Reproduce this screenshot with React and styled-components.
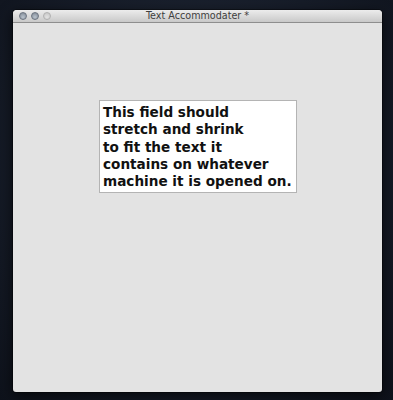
import styled, { createGlobalStyle } from 'styled-components';

const GlobalStyle = createGlobalStyle`
  html, body {
    margin: 0;
    padding: 0;
  }
  body {
    width: 393px;
    height: 400px;
    overflow: hidden;
    background: radial-gradient(ellipse at 50% 40%, #222a3a 0%, #161c28 60%, #0e121b 100%);
    font-family: "DejaVu Sans", "Liberation Sans", sans-serif;
  }
`;

const Desktop = styled.div`
  width: 393px;
  height: 400px;
  padding: 10px 11px 8px 13px;
  box-sizing: border-box;
  display: flex;
`;

const Window = styled.div`
  flex: 1;
  display: flex;
  flex-direction: column;
  border-radius: 4px 4px 3px 3px;
  overflow: hidden;
  background: #e3e3e3;
  box-shadow: 0 4px 14px rgba(0, 0, 0, 0.7), 0 0 0 1px rgba(0, 0, 0, 0.35);
`;

const TitleBar = styled.div`
  height: 12px;
  flex-shrink: 0;
  display: flex;
  align-items: center;
  position: relative;
  padding: 0 6px;
  background: linear-gradient(#ececec, #c9c9c9);
  border-bottom: 1px solid #8e8e8e;
`;

const Lights = styled.div`
  display: flex;
  gap: 4px;
`;

const Light = styled.span`
  width: 8px;
  height: 8px;
  border-radius: 50%;
  box-sizing: border-box;
  background: ${p => p.$dim
    ? 'radial-gradient(circle at 50% 70%, #e2e2e2, #c4c4c4)'
    : 'radial-gradient(circle at 50% 70%, #b9c2cc, #7d8793)'};
  border: 1px solid ${p => (p.$dim ? '#b0b0b0' : '#6c7580')};
`;

const Title = styled.div`
  position: absolute;
  left: 0;
  right: 0;
  text-align: center;
  font-size: 9.6px;
  color: #3e3e3e;
  line-height: 12px;
`;

const Content = styled.div`
  flex: 1;
  padding: 77px 0 0 86px;
`;

const Field = styled.div`
  display: inline-block;
  background: #fff;
  border: 1px solid #b4b4b4;
  padding: 3px 4px 2px 3px;
  font-weight: bold;
  font-size: 13.6px;
  line-height: 17.3px;
  color: #111;
  white-space: pre;
`;

export default function App() {
  return (
    <>
      <GlobalStyle />
      <Desktop>
        <Window>
          <TitleBar>
            <Lights>
              <Light />
              <Light />
              <Light $dim />
            </Lights>
            <Title>Text Accommodater *</Title>
          </TitleBar>
          <Content>
            <Field>
              {'This field should\nstretch and shrink\nto fit the text it\ncontains on whatever\nmachine it is opened on.'}
            </Field>
          </Content>
        </Window>
      </Desktop>
    </>
  );
}
